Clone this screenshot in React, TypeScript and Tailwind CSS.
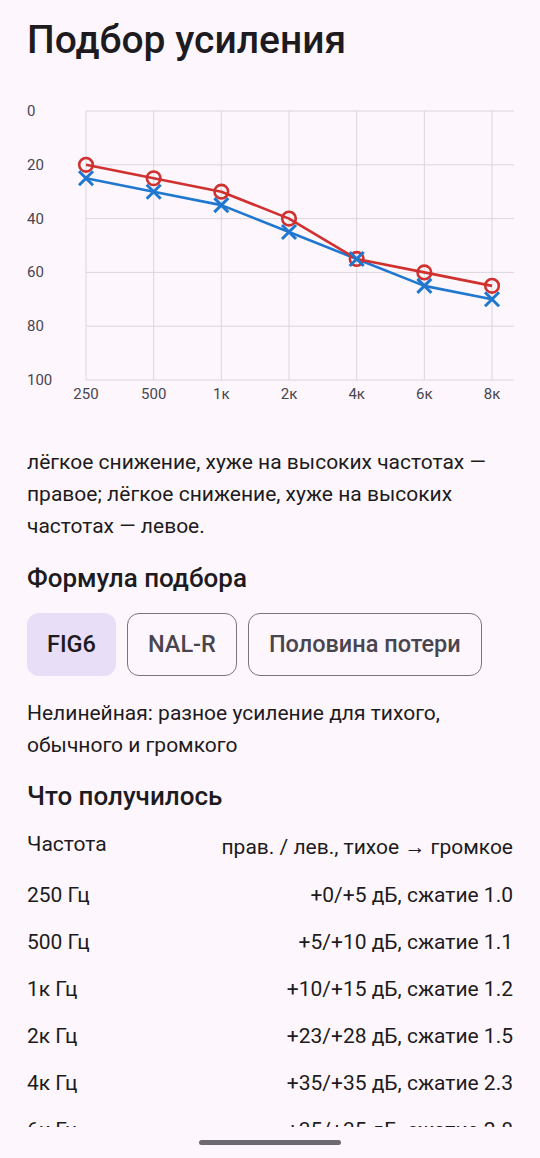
import React from "react";

const FREQS = ["250", "500", "1к", "2к", "4к", "6к", "8к"];
const RIGHT = [20, 25, 30, 40, 55, 60, 65];
const LEFT = [25, 30, 35, 45, 55, 65, 70];

// plot area inside the svg
const PL = 59;
const PR = 487;
const PT = 11;
const PB = 280;
const STEP = 67.67;

const xAt = (i: number) => PL + i * STEP;
const yAt = (db: number) => PT + (db / 100) * (PB - PT);

function Audiogram() {
  const ticks = [0, 20, 40, 60, 80, 100];
  const redPts = RIGHT.map((v, i) => `${xAt(i)},${yAt(v)}`).join(" ");
  const bluePts = LEFT.map((v, i) => `${xAt(i)},${yAt(v)}`).join(" ");
  return (
    <svg width="487" height="310" viewBox="0 0 487 310" className="block">
      {ticks.map((t) => (
        <line key={`h${t}`} x1={PL} x2={PR} y1={yAt(t)} y2={yAt(t)} stroke="#dcd6dc" strokeWidth="1" />
      ))}
      {FREQS.map((f, i) => (
        <line key={`v${f}`} x1={xAt(i)} x2={xAt(i)} y1={PT} y2={PB} stroke="#dcd6dc" strokeWidth="1" />
      ))}
      {ticks.map((t) => (
        <text
          key={`l${t}`}
          x={0}
          y={yAt(t)}
          dominantBaseline="central"
          fontFamily="Roboto, sans-serif"
          fontSize="15"
          fill="#49454f"
        >
          {t}
        </text>
      ))}
      {FREQS.map((f, i) => (
        <text
          key={`f${f}`}
          x={xAt(i)}
          y={294}
          textAnchor="middle"
          dominantBaseline="central"
          fontFamily="Roboto, sans-serif"
          fontSize="15"
          fill="#49454f"
        >
          {f}
        </text>
      ))}
      <polyline points={bluePts} fill="none" stroke="#1f77d0" strokeWidth="2.6" strokeLinejoin="round" />
      <polyline points={redPts} fill="none" stroke="#d0302e" strokeWidth="2.6" strokeLinejoin="round" />
      {RIGHT.map((v, i) => (
        <circle key={`c${i}`} cx={xAt(i)} cy={yAt(v)} r="6.8" fill="none" stroke="#d0302e" strokeWidth="2.6" />
      ))}
      {LEFT.map((v, i) => {
        const cx = xAt(i);
        const cy = yAt(v);
        const d = 7;
        return (
          <g key={`x${i}`} stroke="#1f77d0" strokeWidth="3" strokeLinecap="butt">
            <line x1={cx - d} y1={cy - d} x2={cx + d} y2={cy + d} />
            <line x1={cx - d} y1={cy + d} x2={cx + d} y2={cy - d} />
          </g>
        );
      })}
    </svg>
  );
}

const ROWS: [string, string][] = [
  ["250 Гц", "+0/+5 дБ, сжатие 1.0"],
  ["500 Гц", "+5/+10 дБ, сжатие 1.1"],
  ["1к Гц", "+10/+15 дБ, сжатие 1.2"],
  ["2к Гц", "+23/+28 дБ, сжатие 1.5"],
  ["4к Гц", "+35/+35 дБ, сжатие 2.3"],
  ["6к Гц", "+35/+35 дБ, сжатие 2.8"],
];

export default function App() {
  return (
    <div className="h-[1158px] w-[540px] bg-[#fdf7fd] text-[#1d1b20] font-['Roboto',sans-serif] flex flex-col overflow-hidden">
      <div className="h-[1127px] overflow-hidden px-[27px]">
        <h1 className="mt-[18px] text-[39px] leading-[44px] font-medium">Подбор усиления</h1>

        <div className="mt-[38px]">
          <Audiogram />
        </div>

        <p className="mt-[36px] text-[21px] leading-[32px]">
          лёгкое снижение, хуже на высоких частотах — правое; лёгкое снижение, хуже на высоких частотах — левое.
        </p>

        <h2 className="mt-[20px] text-[26px] leading-[32px] font-medium">Формула подбора</h2>

        <div className="mt-[19px] flex gap-[11px]">
          <button className="h-[63px] px-[20px] rounded-[12px] bg-[#e8def8] text-[23.5px] font-medium text-[#1d1b20]">
            FIG6
          </button>
          <button className="h-[63px] px-[20px] rounded-[12px] border border-[#79747e] text-[23.5px] font-medium text-[#49454f]">
            NAL-R
          </button>
          <button className="h-[63px] px-[20px] rounded-[12px] border border-[#79747e] text-[23.5px] font-medium text-[#49454f]">
            Половина потери
          </button>
        </div>

        <p className="mt-[21px] text-[21px] leading-[32px]">
          Нелинейная: разное усиление для тихого, обычного и громкого
        </p>

        <h2 className="mt-[19px] text-[26px] leading-[32px] font-medium">Что получилось</h2>

        <div className="mt-[16px] flex justify-between items-start text-[21px] leading-[32px]">
          <span>Частота</span>
          <span className="pt-[3px]">прав. / лев., тихое → громкое</span>
        </div>
        <div className="mt-[9px] flex flex-col">
          {ROWS.map(([f, v]) => (
            <div key={f} className="h-[47px] flex items-center justify-between text-[21px]">
              <span>{f}</span>
              <span>{v}</span>
            </div>
          ))}
        </div>
      </div>
      <div className="flex-1 flex items-center justify-center">
        <div className="w-[142px] h-[5px] rounded-full bg-[#6e6a72]" />
      </div>
    </div>
  );
}
